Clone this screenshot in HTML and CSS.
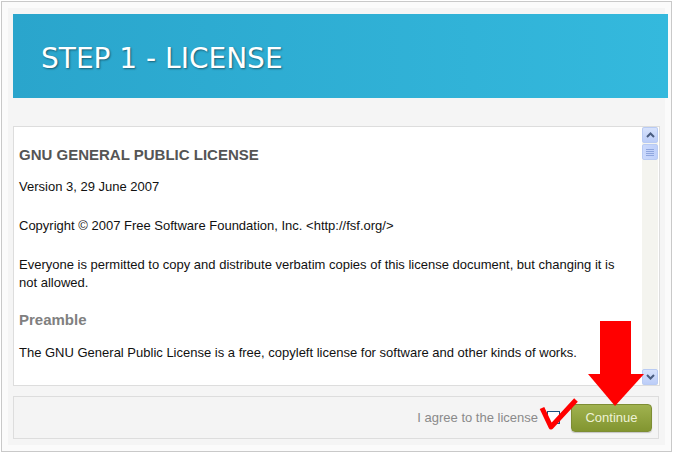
FILE: index.html
```html
<!DOCTYPE html>
<html lang="en">
<head>
    <meta charset="UTF-8">
    <title>Step 1 - License</title>
    <link rel="stylesheet" href="styles.css">
</head>
<body>
    <div class="frame">
        <div class="banner">
            <h1>STEP 1 - LICENSE</h1>
        </div>

        <div class="license">
            <div class="license-text">
                <h2>GNU GENERAL PUBLIC LICENSE</h2>
                <p>Version 3, 29 June 2007</p>
                <p>Copyright &copy; 2007 Free Software Foundation, Inc. &lt;http://fsf.org/&gt;</p>
                <p>Everyone is permitted to copy and distribute verbatim copies of this license document, but changing it is not allowed.</p>
                <h3>Preamble</h3>
                <p>The GNU General Public License is a free, copyleft license for software and other kinds of works.</p>
            </div>
            <div class="scrollbar">
                <div class="sb-btn">
                    <svg width="9" height="6" viewBox="0 0 9 6"><path d="M1 5 L4.5 1.5 L8 5" fill="none" stroke="#4a5d80" stroke-width="2"/></svg>
                </div>
                <div class="sb-thumb">
                    <span></span><span></span><span></span><span></span>
                </div>
                <div class="sb-track"></div>
                <div class="sb-btn">
                    <svg width="9" height="6" viewBox="0 0 9 6"><path d="M1 1 L4.5 4.5 L8 1" fill="none" stroke="#4a5d80" stroke-width="2"/></svg>
                </div>
            </div>
        </div>

        <div class="agree-bar">
            <label class="agree-label" for="agree">I agree to the license</label>
            <span class="checkbox" id="agree"></span>
            <button class="continue">Continue</button>
        </div>

        <!-- red hints drawn over the form -->
        <svg class="marks" width="673" height="453" viewBox="0 0 673 453">
            <rect x="600" y="321" width="31" height="54" fill="#ff0000"/>
            <polygon points="588,374 644,374 615,406" fill="#ff0000"/>
            <path d="M542 408 L551 427 L576 400" fill="none" stroke="#ff0000" stroke-width="5" stroke-linejoin="round"/>
        </svg>
    </div>
</body>
</html>
```

FILE: styles.css
```css
body {
    margin: 0;
    background-color: #ffffff;
    font-family: "Liberation Sans", Arial, sans-serif;
}

.frame {
    position: relative;
    margin: 1px;
    width: 671px;
    height: 451px;
    box-sizing: border-box;
    border: 1px solid #c9c9c9;
    background-color: #f5f5f5;
    box-shadow: inset 0 0 0 6px #fbfbfb;
    padding: 12px 3px 0 11px;
}

.banner {
    height: 84px;
    background: linear-gradient(to right, #2aa5cc, #34b9dd);
    display: flex;
    align-items: center;
    padding-left: 28px;
}

.banner h1 {
    margin: 4px 0 0 0;
    font-family: "DejaVu Sans", Verdana, sans-serif;
    font-size: 28px;
    font-weight: normal;
    color: #ffffff;
    text-shadow: 1px 1px 2px rgba(0, 0, 0, 0.45);
}

.license {
    display: flex;
    margin: 28px 8px 0 0;
    height: 260px;
    box-sizing: border-box;
    border: 1px solid #dddddd;
    background-color: #ffffff;
    overflow: hidden;
}

.license-text {
    flex: 1;
    padding: 0 12px 0 5px;
    font-size: 13px;
    color: #111111;
}

.license-text h2 {
    margin: 20px 0 15px;
    font-size: 15px;
    line-height: 16px;
    color: #555555;
}

.license-text p {
    margin: 0 0 21px;
    line-height: 18px;
}

.license-text h3 {
    margin: -2px 0 15px;
    font-size: 15px;
    line-height: 18px;
    color: #808080;
}

.scrollbar {
    width: 16px;
    margin-right: 1px;
    display: flex;
    flex-direction: column;
    background-color: #f4f4ef;
}

.sb-btn {
    height: 16px;
    box-sizing: border-box;
    border: 1px solid #b9cbf3;
    border-radius: 2px;
    background: linear-gradient(#d7e2fc, #bccdf8);
    display: flex;
    align-items: center;
    justify-content: center;
}

.sb-thumb {
    height: 16px;
    margin-top: 1px;
    box-sizing: border-box;
    border: 1px solid #b9cbf3;
    border-radius: 2px;
    background: linear-gradient(to right, #cbd9fc, #bfd0fa);
    display: flex;
    flex-direction: column;
    align-items: center;
    justify-content: center;
    gap: 1px;
}

.sb-thumb span {
    width: 8px;
    height: 1px;
    background-color: #8fa6de;
}

.sb-track {
    flex: 1;
}

.agree-bar {
    display: flex;
    align-items: center;
    justify-content: flex-end;
    margin: 10px 9px 0 0;
    height: 43px;
    box-sizing: border-box;
    border: 1px solid #dddddd;
    background-color: #f4f4f4;
    padding-right: 6px;
}

.agree-label {
    font-size: 13px;
    color: #8a8a8a;
    margin-right: 9px;
}

.checkbox {
    width: 13px;
    height: 13px;
    box-sizing: border-box;
    border: 1px solid #1c5180;
    background-color: #ffffff;
    margin-right: 11px;
}

.continue {
    width: 81px;
    height: 28px;
    border: 1px solid #7d8d33;
    border-radius: 4px;
    background: linear-gradient(#a0b24f, #829530);
    color: #eef2d6;
    font-family: "Liberation Sans", Arial, sans-serif;
    font-size: 13px;
    box-shadow: 0 1px 1px rgba(0, 0, 0, 0.2);
}

.marks {
    position: absolute;
    left: -2px;
    top: -2px;
    pointer-events: none;
}
```
